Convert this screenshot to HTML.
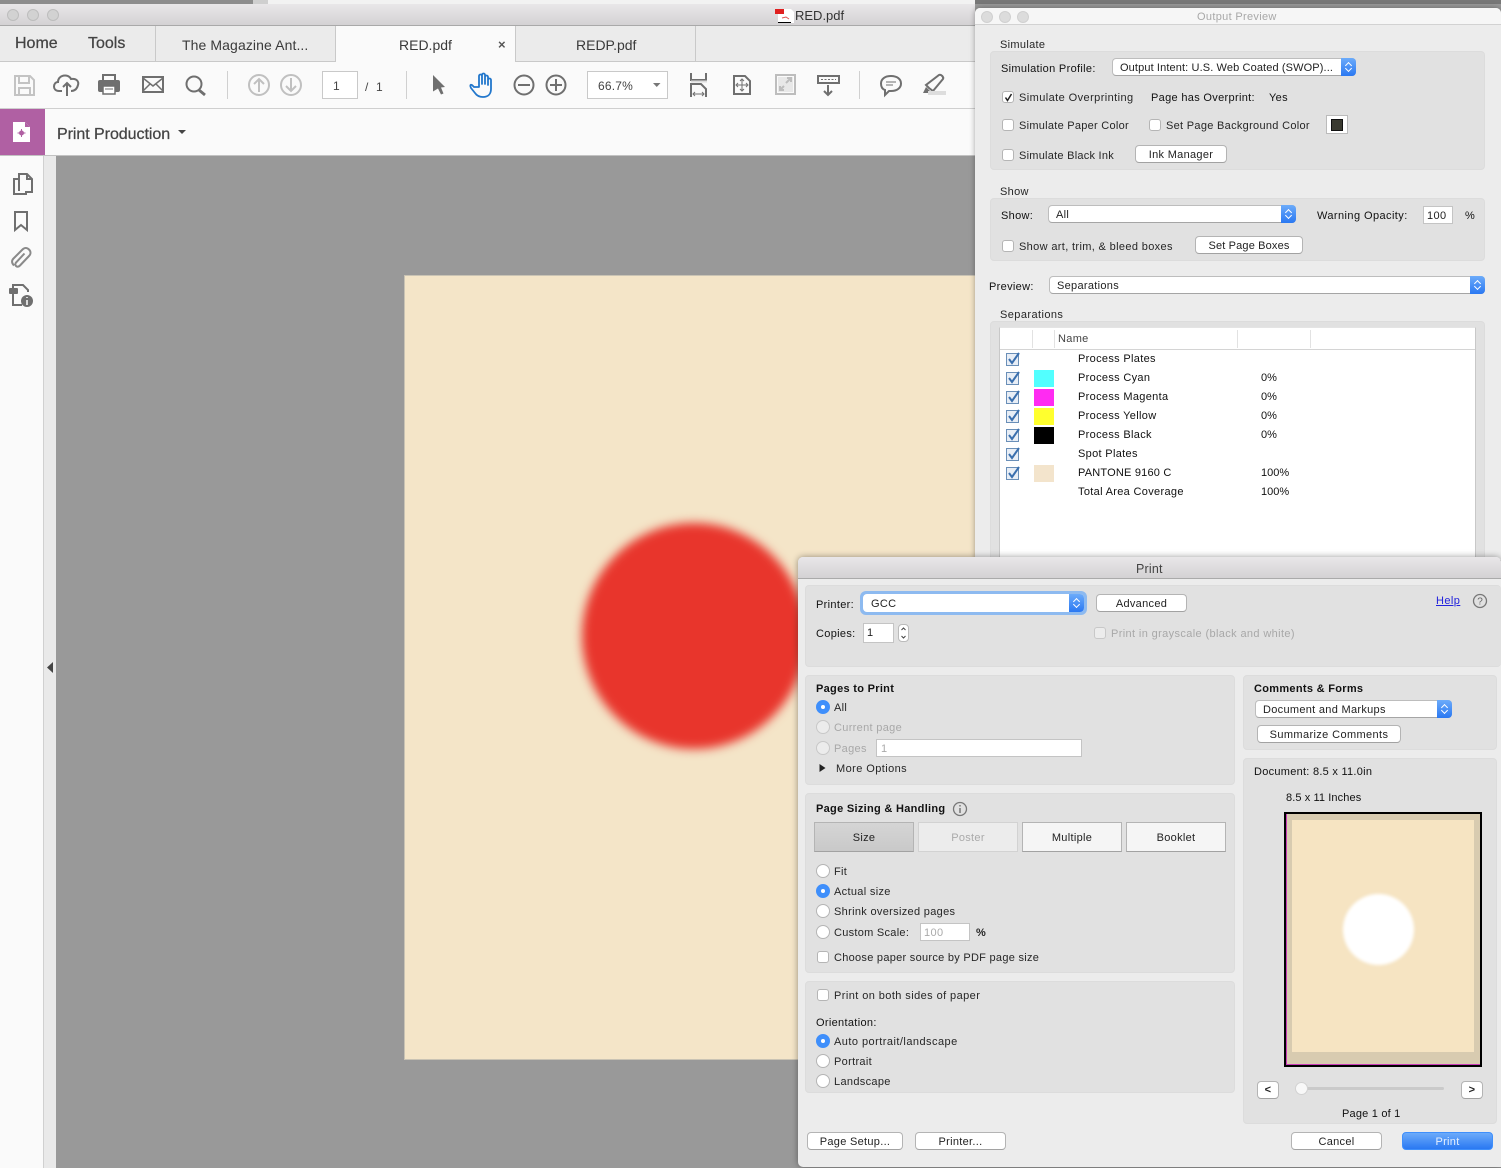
<!DOCTYPE html>
<html><head><meta charset="utf-8"><style>
html,body{margin:0;padding:0;width:1501px;height:1168px;overflow:hidden;background:#999}
body{position:relative;font-family:"Liberation Sans",sans-serif;color:#222}
div,span,svg{position:absolute;box-sizing:border-box}
.t{font-size:11px;line-height:14px;letter-spacing:.32px;white-space:nowrap;color:#262626;margin-top:1px}
.b{font-weight:bold;letter-spacing:.3px;color:#111}
.g{color:#a8a8a8}
.w{letter-spacing:.42px}
.box{background:#e1e1e1;border:1px solid #dcdcdc;border-radius:4px}
.btn{background:#fff;border:1px solid #b4b4b4;border-bottom-color:#a2a2a2;border-radius:4px;font-size:11px;letter-spacing:.3px;text-align:center;color:#222;white-space:nowrap;padding-top:1px}
.sel{background:#fff;border:1px solid #bdbdbd;border-bottom-color:#a5a5a5;border-radius:4px;font-size:11px;letter-spacing:.3px;color:#222;padding-left:7px;padding-top:1px;white-space:nowrap}
.arr{right:-1px;top:-1px;bottom:-1px;width:15px;background:linear-gradient(#6cabfa,#2a78f2);border-radius:0 4px 4px 0}
.arr:before,.arr:after{content:"";position:absolute;left:5px;width:4px;height:4px;border:solid #fff;border-width:1px 0 0 1px}
.arr:before{top:5px;transform:rotate(45deg)}
.arr:after{bottom:5px;transform:rotate(225deg)}
.cb{width:12px;height:12px;background:#fff;border:1px solid #b5b5b5;border-radius:3px}
.rd{width:14px;height:14px;background:#fff;border:1px solid #b5b5b5;border-radius:50%}
.rd.on{background:#3f8ffb;border-color:#3f8ffb}
.rd.on:after{content:"";position:absolute;left:4px;top:4px;width:4px;height:4px;background:#fff;border-radius:50%}
.rd.off{background:#ececec;border-color:#c8c8c8}
.inp{background:#fff;border:1px solid #c4c4c4;font-size:11px;letter-spacing:.4px;white-space:nowrap}
.tl{width:12px;height:12px;border-radius:50%;background:#d2d2d2;border:1px solid #bdbdbd}
.tab{font-size:14px;line-height:16px;color:#3a3a3a;text-align:center;white-space:nowrap}
.sw{left:1034px;width:20px;height:17px}
</style></head><body>

<!-- top strip -->
<div style="left:0;top:0;width:253px;height:4px;background:#8d8d8d"></div>
<div style="left:253px;top:0;width:15px;height:4px;background:#cfcfcf"></div>
<div style="left:268px;top:0;width:707px;height:4px;background:#f2f2f2"></div>
<div style="left:975px;top:0;width:526px;height:4px;background:#777"></div>

<!-- main window -->
<div style="left:0;top:4px;width:975px;height:22px;background:linear-gradient(#e9e7e9,#d4d2d4);border-bottom:1px solid #a9a9a9"></div>
<div class="tl" style="left:7px;top:9px"></div><div class="tl" style="left:27px;top:9px"></div><div class="tl" style="left:47px;top:9px"></div>
<span class="tab" style="left:795px;top:8px;font-size:13px;color:#333">RED.pdf</span>

<div style="left:0;top:26px;width:975px;height:36px;background:#ebebeb;border-bottom:1px solid #c9c9c9"></div>
<div style="left:155px;top:26px;width:181px;height:36px;border-left:1px solid #c9c9c9;border-right:1px solid #c9c9c9"></div>
<div style="left:336px;top:26px;width:180px;height:36px;background:#fafafa"></div>
<div style="left:515px;top:26px;width:181px;height:36px;border-left:1px solid #c9c9c9;border-right:1px solid #c9c9c9"></div>
<span class="tab" style="left:15px;top:36px;font-size:16px;color:#444;-webkit-text-stroke:.25px #444">Home</span>
<span class="tab" style="left:88px;top:36px;font-size:16px;color:#444;-webkit-text-stroke:.25px #444">Tools</span>
<span class="tab" style="left:182px;top:37px;letter-spacing:.1px">The Magazine Ant...</span>
<span class="tab" style="left:399px;top:37px">RED.pdf</span>
<span class="tab" style="left:498px;top:37px;font-size:13px;font-weight:bold;color:#555">×</span>
<span class="tab" style="left:576px;top:37px">REDP.pdf</span>

<div style="left:0;top:62px;width:975px;height:47px;background:#fafafa;border-bottom:1px solid #cfcfcf"></div>
<div style="left:0;top:109px;width:975px;height:47px;background:#fafafa;border-bottom:1px solid #c2c2c2"></div>
<div style="left:0;top:109px;width:45px;height:46px;background:#b060a3"></div>
<span class="tab" style="left:57px;top:127px;font-size:16px;letter-spacing:-.05px;color:#444;-webkit-text-stroke:.25px #444">Print Production</span>

<div style="left:322px;top:71px;width:36px;height:28px;background:#fff;border:1px solid #c9c9c9"></div>
<span class="t" style="left:333px;top:78px;font-size:12px;color:#444">1</span>
<span class="t" style="left:365px;top:79px;font-size:12px;color:#444">/</span>
<span class="t" style="left:376px;top:79px;font-size:12px;color:#444">1</span>
<div style="left:587px;top:71px;width:81px;height:28px;background:#fff;border:1px solid #c9c9c9"></div>
<span class="t" style="left:598px;top:78px;font-size:12px;letter-spacing:.2px;color:#444">66.7%</span>

<div style="left:0;top:156px;width:44px;height:1012px;background:#fafafa;border-right:1px solid #d0d0d0"></div>
<div style="left:44px;top:156px;width:12px;height:1012px;background:#e9e9e9"></div>

<!-- page -->
<div style="left:404px;top:275px;width:571px;height:785px;background:#f4e5c8;border:1px solid #c9c3b4;border-right:0;overflow:hidden">
<div style="left:177px;top:247px;width:224px;height:226px;border-radius:50%;background:#e8352c;filter:blur(5px)"></div>
</div>

<!-- toolbar icons -->
<svg style="left:0;top:0" width="975" height="320" viewBox="0 0 975 320" fill="none">
<!-- pdf title icon -->
<path d="M778 9h13l3 3v11h-16z" fill="#fff"/><rect x="775" y="9" width="9" height="5" fill="#e02020"/><path d="M782 18l4-1 3 2" stroke="#e05050"/><path d="M778 22.500h13" stroke="#000"/>
<!-- save -->
<path d="M15 76h15l4 4v15H15z M19 76v7h10v-7 M19 95v-7h11v7" stroke="#c3c3c3" stroke-width="2"/>
<!-- cloud -->
<path d="M62 91h-3c-7 0-6-9-1-9 0-7 10-9 13-3 6-1 8 3 7 6-1 4-3 6-7 6M67 96V83m-4 4 4-4 4 4" stroke="#6f6f6f" stroke-width="2"/>
<!-- print -->
<path d="M103 81v-6h12v6" stroke="#6f6f6f" stroke-width="2"/><rect x="98" y="80" width="22" height="12" rx="2" fill="#6f6f6f"/><rect x="103" y="86" width="12" height="8" fill="#fff" stroke="#6f6f6f" stroke-width="1.500"/><path d="M105 89h8" stroke="#6f6f6f"/>
<!-- mail -->
<rect x="143" y="77" width="20" height="15" stroke="#6f6f6f" stroke-width="2"/><path d="M143 78l10 8 10-8M143 91l7-7M163 91l-7-7" stroke="#6f6f6f" stroke-width="1.500"/>
<!-- search -->
<circle cx="194" cy="84" r="7.500" stroke="#6f6f6f" stroke-width="2"/><path d="M199 90l6 5" stroke="#6f6f6f" stroke-width="2.800"/>
<path d="M227.500 71v28" stroke="#d0d0d0"/>
<!-- up/down -->
<circle cx="259" cy="85" r="10" stroke="#c0c0c0" stroke-width="2"/><path d="M259 92V79m-5 5 5-5 5 5" stroke="#c0c0c0" stroke-width="2"/>
<circle cx="291" cy="85" r="10" stroke="#c0c0c0" stroke-width="2"/><path d="M291 78v13m-5-5 5 5 5-5" stroke="#c0c0c0" stroke-width="2"/>
<path d="M406.500 71v28" stroke="#d0d0d0"/>
<!-- cursor -->
<path d="M433 75l12 12-4 .5 2.500 6-2.500 1-3-6-5 3z" fill="#6f6f6f"/>
<!-- hand -->
<path d="M474 87l-2-2c-2-1-2 1-1 3l4 5c2 3 5 4 8 4 5 0 8-3 8-8v-9c0-2-3-2-3 0v5-8c0-2-3-2-3 0v7-9c0-2-3-2-3 0v9-8c0-2-3-2-3 0v11z" stroke="#2277cc" stroke-width="1.800" stroke-linejoin="round"/>
<!-- zoom -->
<circle cx="524" cy="85" r="9.500" stroke="#6f6f6f" stroke-width="2"/><path d="M518 85h12" stroke="#6f6f6f" stroke-width="2"/>
<circle cx="556" cy="85" r="9.500" stroke="#6f6f6f" stroke-width="2"/><path d="M550 85h12M556 79v12" stroke="#6f6f6f" stroke-width="2"/>
<path d="M653 83h7.500l-3.750 4z" fill="#777"/>
<!-- fit width -->
<path d="M691 73v7h15v-7M691 97v-13h10l5 5v8" stroke="#6f6f6f" stroke-width="2"/><path d="M691 81.500h16" stroke="#ddd" stroke-width="2"/><path d="M693 94h11m-9-2-2 2 2 2m7-4 2 2-2 2" stroke="#6f6f6f"/>
<!-- fit page -->
<path d="M734 76h11l5 5v13h-16z" stroke="#6f6f6f" stroke-width="2"/><path d="M742 80v10M737 85h10" stroke="#6f6f6f"/><path d="M740 81l2-2 2 2M740 89l2 2 2-2M738 83l-2 2 2 2M746 83l2 2-2 2" stroke="#6f6f6f"/>
<!-- full screen -->
<rect x="776" y="75" width="19" height="19" stroke="#bdbdbd" stroke-width="2"/><rect x="778" y="77" width="15" height="15" fill="#e8e8e8"/><path d="M786 83l5-5m-4 0h4v4M784 86l-4 4m4 0h-4v-4" stroke="#bdbdbd" stroke-width="2"/>
<!-- read mode -->
<rect x="818" y="76" width="21" height="7" stroke="#6f6f6f" stroke-width="2"/><path d="M821 79.500h15" stroke="#6f6f6f" stroke-dasharray="2 1.500"/><path d="M828 85v10m-4-4 4 4 4-4" stroke="#6f6f6f" stroke-width="2"/>
<path d="M859.500 71v28" stroke="#d0d0d0"/>
<!-- comment -->
<path d="M891 76c6 0 10 3 10 7.500s-4 7.500-10 7.500h-2l-4 4v-5c-3-1-4-4-4-6.500 0-4.500 4-7.500 10-7.500z" stroke="#6f6f6f" stroke-width="2"/><path d="M886 82h10M886 85h7" stroke="#6f6f6f"/>
<!-- highlight -->
<path d="M929 88l-3-3 13-10c2-1 5 2 4 4l-10 12z" stroke="#6f6f6f" stroke-width="2"/><path d="M926 87l-3 6h5l2-2z" fill="#6f6f6f"/><rect x="928" y="91" width="18" height="4" fill="#ddd"/>
<!-- print production caret -->
<path d="M178 130h8l-4 4z" fill="#444"/>
<!-- purple icon -->
<path d="M13 122h12l5 5v15H13z" fill="#fff"/><path d="M25 122l5 5h-5z" fill="#b060a3"/><circle cx="21.500" cy="133" r="2.500" fill="#b060a3"/><path d="M21.500 129v8M17.500 133h8" stroke="#b060a3"/>
<!-- side icons -->
<path d="M19 191V174h8l5 5v13h-6M19 179h-5v15h12v-3M27 174v5h5" stroke="#6f6f6f" stroke-width="2"/>
<path d="M15 212h12v18l-6-5-6 5z" stroke="#6f6f6f" stroke-width="2"/>
<path d="M14 265.500c-2.500-2.500-2.500-5-.5-7l9-9c2-2 4.500-2 6.500 0s2 4.500 0 6.500l-9 9.500c-1.500 1.500-3 1.500-4 .5s-1-2.500.5-4l8-8.500" stroke="#8a8a8a" stroke-width="2"/>
<path d="M13 291v-6h10l5 5v2M13 291v14h9" stroke="#6f6f6f" stroke-width="2"/><rect x="9" y="288" width="9" height="6" rx="1" fill="#6f6f6f"/><circle cx="27" cy="301" r="6" fill="#6f6f6f"/><path d="M27 297v1M27 300v5" stroke="#fff" stroke-width="1.500"/>
</svg>
<svg style="left:46px;top:661px" width="8" height="14"><path d="M7 1v11L1 6.500z" fill="#444"/></svg>

<!-- Output Preview -->
<div style="left:975px;top:8px;width:526px;height:552px;background:#ececec;border-radius:5px 5px 0 0;box-shadow:0 0 6px rgba(0,0,0,.35)"></div>
<div style="left:975px;top:8px;width:526px;height:17px;background:#f6f6f6;border-bottom:1px solid #d2d2d2;border-radius:5px 5px 0 0"></div>
<div class="tl" style="left:981px;top:11px;background:#dcdcdc;border-color:#d0d0d0"></div><div class="tl" style="left:999px;top:11px;background:#dcdcdc;border-color:#d0d0d0"></div><div class="tl" style="left:1017px;top:11px;background:#dcdcdc;border-color:#d0d0d0"></div>
<span class="t g" style="left:1197px;top:9px">Output Preview</span>

<span class="t" style="left:1000px;top:37px">Simulate</span>
<div class="box" style="left:990px;top:51px;width:495px;height:119px"></div>
<span class="t" style="left:1001px;top:61px;color:#111">Simulation Profile:</span>
<div class="sel" style="left:1112px;top:58px;width:244px;height:18px;line-height:16px;letter-spacing:.12px">Output Intent: U.S. Web Coated (SWOP)...<span class="arr"></span></div>
<div class="cb" style="left:1002px;top:91px"></div>
<svg style="left:1004px;top:93px" width="9" height="9"><path d="M1.500 4.500l2 3 4-6.500" stroke="#222" stroke-width="1.500" fill="none"/></svg>
<span class="t w" style="left:1019px;top:90px">Simulate Overprinting</span>
<span class="t" style="left:1151px;top:90px;color:#111">Page has Overprint:</span>
<span class="t" style="left:1269px;top:90px;color:#111">Yes</span>
<div class="cb" style="left:1002px;top:119px"></div>
<span class="t" style="left:1019px;top:118px;letter-spacing:.27px">Simulate Paper Color</span>
<div class="cb" style="left:1149px;top:119px"></div>
<span class="t" style="left:1166px;top:118px;letter-spacing:.3px">Set Page Background Color</span>
<div style="left:1326px;top:115px;width:22px;height:19px;background:#fff;border:1px solid #bbb"></div>
<div style="left:1331px;top:119px;width:12px;height:12px;background:#3a3a30;border:1px solid #111"></div>
<div class="cb" style="left:1002px;top:149px"></div>
<span class="t" style="left:1019px;top:148px;letter-spacing:.25px">Simulate Black Ink</span>
<div class="btn" style="left:1135px;top:145px;width:92px;height:18px;line-height:16px">Ink Manager</div>

<span class="t" style="left:1000px;top:184px">Show</span>
<div class="box" style="left:990px;top:198px;width:495px;height:63px"></div>
<span class="t" style="left:1001px;top:208px;color:#111">Show:</span>
<div class="sel" style="left:1048px;top:205px;width:248px;height:18px;line-height:16px">All<span class="arr"></span></div>
<span class="t w" style="left:1317px;top:208px;color:#111">Warning Opacity:</span>
<div class="inp" style="left:1423px;top:206px;width:30px;height:18px;line-height:18px;padding-left:3px">100</div>
<span class="t" style="left:1465px;top:208px;color:#111">%</span>
<div class="cb" style="left:1002px;top:240px"></div>
<span class="t" style="left:1019px;top:239px;letter-spacing:.35px">Show art, trim, &amp; bleed boxes</span>
<div class="btn" style="left:1195px;top:236px;width:108px;height:18px;line-height:16px;letter-spacing:.15px">Set Page Boxes</div>

<span class="t" style="left:989px;top:279px;color:#111">Preview:</span>
<div class="sel" style="left:1049px;top:276px;width:436px;height:18px;line-height:16px">Separations<span class="arr"></span></div>

<span class="t w" style="left:1000px;top:307px">Separations</span>
<div class="box" style="left:990px;top:321px;width:495px;height:240px"></div>
<div style="left:999px;top:327px;width:477px;height:232px;background:#fff;border:1px solid #c8c8c8;border-top:1px solid #e4e4e4"></div>
<div style="left:1000px;top:349px;width:475px;height:1px;background:#d4d4d4"></div>
<div style="left:1032px;top:330px;width:1px;height:18px;background:#e2e2e2"></div>
<div style="left:1054px;top:330px;width:1px;height:18px;background:#e2e2e2"></div>
<div style="left:1237px;top:330px;width:1px;height:18px;background:#e2e2e2"></div>
<div style="left:1310px;top:330px;width:1px;height:18px;background:#e2e2e2"></div>
<span class="t" style="left:1058px;top:331px;color:#444">Name</span>
<svg style="left:1001px;top:349px" width="30" height="135" fill="none">
<g id="x"><rect x="5.500" y="4.500" width="12" height="12" fill="#e8eef6" stroke="#6a8fb8"/><path d="M8 10l3 4 7-10" stroke="#3a6fae" stroke-width="2"/></g>
<g transform="translate(0 19)"><rect x="5.500" y="4.500" width="12" height="12" fill="#e8eef6" stroke="#6a8fb8"/><path d="M8 10l3 4 7-10" stroke="#3a6fae" stroke-width="2"/></g>
<g transform="translate(0 38)"><rect x="5.500" y="4.500" width="12" height="12" fill="#e8eef6" stroke="#6a8fb8"/><path d="M8 10l3 4 7-10" stroke="#3a6fae" stroke-width="2"/></g>
<g transform="translate(0 57)"><rect x="5.500" y="4.500" width="12" height="12" fill="#e8eef6" stroke="#6a8fb8"/><path d="M8 10l3 4 7-10" stroke="#3a6fae" stroke-width="2"/></g>
<g transform="translate(0 76)"><rect x="5.500" y="4.500" width="12" height="12" fill="#e8eef6" stroke="#6a8fb8"/><path d="M8 10l3 4 7-10" stroke="#3a6fae" stroke-width="2"/></g>
<g transform="translate(0 95)"><rect x="5.500" y="4.500" width="12" height="12" fill="#e8eef6" stroke="#6a8fb8"/><path d="M8 10l3 4 7-10" stroke="#3a6fae" stroke-width="2"/></g>
<g transform="translate(0 114)"><rect x="5.500" y="4.500" width="12" height="12" fill="#e8eef6" stroke="#6a8fb8"/><path d="M8 10l3 4 7-10" stroke="#3a6fae" stroke-width="2"/></g>
</svg>
<div class="sw" style="top:370px;background:#52ffff"></div>
<div class="sw" style="top:389px;background:#ff2bf2"></div>
<div class="sw" style="top:408px;background:#ffff2e"></div>
<div class="sw" style="top:427px;background:#000"></div>
<div class="sw" style="top:465px;background:#f3e4cc"></div>
<span class="t" style="left:1078px;top:351px;color:#111">Process Plates</span>
<span class="t" style="left:1078px;top:370px;color:#111">Process Cyan</span><span class="t" style="left:1261px;top:370px;color:#111;letter-spacing:0">0%</span>
<span class="t" style="left:1078px;top:389px;color:#111">Process Magenta</span><span class="t" style="left:1261px;top:389px;color:#111;letter-spacing:0">0%</span>
<span class="t" style="left:1078px;top:408px;color:#111">Process Yellow</span><span class="t" style="left:1261px;top:408px;color:#111;letter-spacing:0">0%</span>
<span class="t" style="left:1078px;top:427px;color:#111">Process Black</span><span class="t" style="left:1261px;top:427px;color:#111;letter-spacing:0">0%</span>
<span class="t" style="left:1078px;top:446px;color:#111">Spot Plates</span>
<span class="t" style="left:1078px;top:465px;color:#111;letter-spacing:.2px">PANTONE 9160 C</span><span class="t" style="left:1261px;top:465px;color:#111;letter-spacing:0">100%</span>
<span class="t" style="left:1078px;top:484px;color:#111">Total Area Coverage</span><span class="t" style="left:1261px;top:484px;color:#111;letter-spacing:0">100%</span>

<!-- Print dialog -->
<div style="left:798px;top:557px;width:703px;height:610px;background:#ececec;border-radius:5px 5px 0 5px;box-shadow:0 0 7px rgba(0,0,0,.4)"></div>
<div style="left:798px;top:557px;width:703px;height:22px;background:linear-gradient(#e9e7e9,#d4d2d4);border-bottom:1px solid #aaa;border-radius:5px 5px 0 0"></div>
<span class="t" style="left:1136px;top:561px;font-size:12.500px;letter-spacing:.2px;color:#444">Print</span>

<div class="box" style="left:805px;top:585px;width:696px;height:82px;border-right:0"></div>
<span class="t" style="left:816px;top:597px;color:#111">Printer:</span>
<div style="left:860px;top:591px;width:227px;height:24px;background:#8dbaf0;border-radius:6px"></div>
<div class="sel" style="left:863px;top:594px;width:221px;height:18px;line-height:16px;border-color:#fff">GCC<span class="arr"></span></div>
<div class="btn" style="left:1096px;top:594px;width:91px;height:18px;line-height:16px">Advanced</div>
<span class="t w" style="left:1436px;top:593px;color:#2222dd;text-decoration:underline">Help</span>
<svg style="left:1472px;top:593px" width="16" height="16" fill="none"><circle cx="8" cy="8" r="6.500" stroke="#777" stroke-width="1.300"/><text x="8" y="11.500" font-size="10" font-family="Liberation Sans" text-anchor="middle" fill="#666">?</text></svg>
<span class="t" style="left:816px;top:626px;color:#111">Copies:</span>
<div class="inp" style="left:863px;top:623px;width:31px;height:20px;line-height:18px;padding-left:3px">1</div>
<div style="left:898px;top:624px;width:11px;height:18px;background:#fff;border:1px solid #bbb;border-radius:4px"></div>
<svg style="left:899px;top:625px" width="9" height="16" fill="none"><path d="M2.500 5L4.500 3l2 2M2.500 11l2 2 2-2" stroke="#444"/></svg>
<div class="cb" style="left:1094px;top:627px;background:#ececec;border-color:#c8c8c8"></div>
<span class="t g" style="left:1111px;top:626px;letter-spacing:.37px">Print in grayscale (black and white)</span>

<div class="box" style="left:805px;top:675px;width:430px;height:110px"></div>
<span class="t b" style="left:816px;top:681px">Pages to Print</span>
<div class="rd on" style="left:816px;top:700px"></div><span class="t" style="left:834px;top:700px">All</span>
<div class="rd off" style="left:816px;top:720px"></div><span class="t g" style="left:834px;top:720px">Current page</span>
<div class="rd off" style="left:816px;top:741px"></div><span class="t g" style="left:834px;top:741px">Pages</span>
<div class="inp" style="left:876px;top:739px;width:206px;height:18px;line-height:18px;padding-left:4px;color:#aaa">1</div>
<svg style="left:818px;top:763px" width="9" height="10"><path d="M1.500 1l6 4-6 4z" fill="#222"/></svg>
<span class="t w" style="left:836px;top:761px">More Options</span>

<div class="box" style="left:805px;top:793px;width:430px;height:180px"></div>
<span class="t b" style="left:816px;top:801px">Page Sizing &amp; Handling</span>
<svg style="left:952px;top:801px" width="16" height="16" fill="none"><circle cx="8" cy="8" r="6.500" stroke="#777" stroke-width="1.300"/><path d="M8 4v1.500M8 7v5" stroke="#777" stroke-width="1.500"/></svg>
<div class="btn" style="left:814px;top:822px;width:100px;height:30px;line-height:28px;background:linear-gradient(#d5d5d5,#c9c9c9);border-radius:0">Size</div>
<div class="btn g" style="left:918px;top:822px;width:100px;height:30px;line-height:28px;background:#ececec;border-color:#d2d2d2;border-radius:0;color:#aaa">Poster</div>
<div class="btn" style="left:1022px;top:822px;width:100px;height:30px;line-height:28px;background:#f5f5f5;border-radius:0">Multiple</div>
<div class="btn" style="left:1126px;top:822px;width:100px;height:30px;line-height:28px;background:#f5f5f5;border-radius:0">Booklet</div>
<div class="rd" style="left:816px;top:864px"></div><span class="t" style="left:834px;top:864px">Fit</span>
<div class="rd on" style="left:816px;top:884px"></div><span class="t" style="left:834px;top:884px">Actual size</span>
<div class="rd" style="left:816px;top:904px"></div><span class="t" style="left:834px;top:904px">Shrink oversized pages</span>
<div class="rd" style="left:816px;top:925px"></div><span class="t" style="left:834px;top:925px;letter-spacing:.28px">Custom Scale:</span>
<div class="inp" style="left:920px;top:923px;width:50px;height:18px;line-height:18px;padding-left:3px;color:#aaa">100</div>
<span class="t" style="left:976px;top:925px;font-weight:bold;letter-spacing:0">%</span>
<div class="cb" style="left:817px;top:951px"></div><span class="t" style="left:834px;top:950px;letter-spacing:.28px">Choose paper source by PDF page size</span>

<div class="box" style="left:805px;top:981px;width:430px;height:112px"></div>
<div class="cb" style="left:817px;top:989px"></div><span class="t w" style="left:834px;top:988px">Print on both sides of paper</span>
<span class="t" style="left:816px;top:1015px;color:#111">Orientation:</span>
<div class="rd on" style="left:816px;top:1034px"></div><span class="t" style="left:834px;top:1034px;letter-spacing:.46px">Auto portrait/landscape</span>
<div class="rd" style="left:816px;top:1054px"></div><span class="t" style="left:834px;top:1054px">Portrait</span>
<div class="rd" style="left:816px;top:1074px"></div><span class="t" style="left:834px;top:1074px">Landscape</span>

<div class="box" style="left:1243px;top:675px;width:254px;height:75px"></div>
<span class="t b" style="left:1254px;top:681px">Comments &amp; Forms</span>
<div class="sel" style="left:1255px;top:700px;width:197px;height:18px;line-height:16px">Document and Markups<span class="arr"></span></div>
<div class="btn" style="left:1257px;top:725px;width:144px;height:18px;line-height:16px;letter-spacing:.38px">Summarize Comments</div>

<div class="box" style="left:1243px;top:758px;width:254px;height:366px"></div>
<span class="t" style="left:1254px;top:764px;color:#111;letter-spacing:.27px">Document: 8.5 x 11.0in</span>
<span class="t" style="left:1286px;top:790px;color:#111;letter-spacing:.1px">8.5 x 11 Inches</span>
<div style="left:1284px;top:812px;width:198px;height:255px;background:#d8cbb0;border:2px solid #000"></div>
<div style="left:1286px;top:814px;width:1px;height:251px;background:#c83cb8"></div>
<div style="left:1286px;top:1064px;width:194px;height:1px;background:#c83cb8"></div>
<div style="left:1292px;top:820px;width:182px;height:232px;background:#f6e4c2"></div>
<div style="left:1343px;top:894px;width:71px;height:71px;border-radius:50%;background:#fff;filter:blur(1.500px)"></div>

<div class="btn" style="left:1257px;top:1081px;width:22px;height:18px;line-height:17px;font-weight:bold;padding-top:0">&lt;</div>
<div class="btn" style="left:1461px;top:1081px;width:22px;height:18px;line-height:17px;font-weight:bold;padding-top:0">&gt;</div>
<div style="left:1296px;top:1087px;width:148px;height:3px;background:#cacaca;border-radius:2px"></div>
<div style="left:1295px;top:1082px;width:13px;height:13px;background:#f8f8f8;border-radius:50%;border:1px solid #d2d2d2"></div>
<span class="t" style="left:1342px;top:1106px;color:#111;letter-spacing:.2px">Page 1 of 1</span>

<div class="btn" style="left:807px;top:1132px;width:96px;height:18px;line-height:16px">Page Setup...</div>
<div class="btn" style="left:915px;top:1132px;width:91px;height:18px;line-height:16px">Printer...</div>
<div class="btn" style="left:1291px;top:1132px;width:91px;height:18px;line-height:16px">Cancel</div>
<div class="btn" style="left:1402px;top:1132px;width:91px;height:18px;line-height:16px;background:linear-gradient(#6cabfa,#2a78f2);border-color:#3f8ffb;color:#e6f0ff">Print</div>
</body></html>
